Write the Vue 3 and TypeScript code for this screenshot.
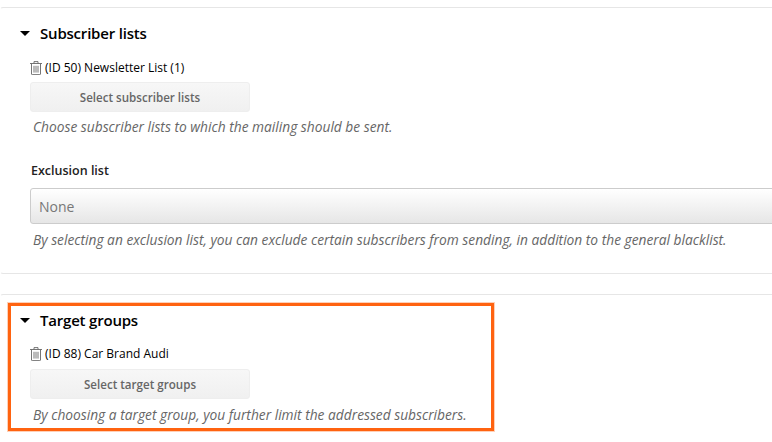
<script setup lang="ts">
</script>

<template>
  <div class="page">
    <section class="card first">
      <h3 class="title"><span class="caret"></span>Subscriber lists</h3>
      <div class="body">
        <div class="item">
          <svg class="trash" viewBox="0 0 12 14" width="12" height="14" fill="none" stroke="#666" stroke-width="0.9">
            <path d="M0 2.5H12M4 2.5V0.6H8V2.5M1.5 2.5V13Q1.5 13.6 2.2 13.6H9.8Q10.5 13.6 10.5 13V2.5M4 4.8V11.6M6 4.8V11.6M8 4.8V11.6" />
          </svg>
          <span>(ID 50) Newsletter List (1)</span>
        </div>
        <button class="btn">Select subscriber lists</button>
        <p class="help">Choose subscriber lists to which the mailing should be sent.</p>
        <label class="label">Exclusion list</label>
        <div class="select">None</div>
        <p class="help after-select">By selecting an exclusion list, you can exclude certain subscribers from sending, in addition to the general blacklist.</p>
      </div>
    </section>
    <section class="card second">
      <div class="highlight"></div>
      <h3 class="title"><span class="caret"></span>Target groups</h3>
      <div class="body">
        <div class="item">
          <svg class="trash" viewBox="0 0 12 14" width="12" height="14" fill="none" stroke="#666" stroke-width="0.9">
            <path d="M0 2.5H12M4 2.5V0.6H8V2.5M1.5 2.5V13Q1.5 13.6 2.2 13.6H9.8Q10.5 13.6 10.5 13V2.5M4 4.8V11.6M6 4.8V11.6M8 4.8V11.6" />
          </svg>
          <span>(ID 88) Car Brand Audi</span>
        </div>
        <button class="btn">Select target groups</button>
        <p class="help">By choosing a target group, you further limit the addressed subscribers.</p>
      </div>
    </section>
  </div>
</template>

<style>
html, body { margin: 0; background: #fff; overflow: hidden; }
</style>

<style scoped>
.page {
  width: 772px;
  height: 442px;
  padding-top: 7px;
  box-sizing: border-box;
  font-family: "Open Sans", sans-serif;
  color: #000;
  overflow: hidden;
}
.card {
  position: relative;
  width: 800px;
  box-sizing: border-box;
  border: 1px solid #e6e6e6;
  border-right: 0;
  border-left-color: transparent;
  border-radius: 3px;
}
.first { height: 267px; margin-bottom: 20px; }
.second { border-bottom: 0; height: 147px; }
.highlight {
  position: absolute;
  left: 7px;
  top: 8px;
  width: 486px;
  height: 128px;
  box-sizing: border-box;
  border: 3px solid #ff6310;
  box-shadow: 0 0 0 1px rgba(255, 99, 16, 0.3);
  pointer-events: none;
}
.title {
  display: flex;
  align-items: center;
  margin: 0 0 1px;
  padding: 14px 0 0 19px;
  height: 22px;
  font-size: 15px;
  letter-spacing: -0.2px;
  line-height: 22px;
  font-weight: 600;
}
.caret {
  width: 0;
  height: 0;
  margin-right: 10px;
  border-left: 5px solid transparent;
  border-right: 5px solid transparent;
  border-top: 5px solid #000;
}
.body { padding: 14px 0 0 29px; }
.second .body { padding-top: 13px; }
.item {
  display: flex;
  align-items: center;
  gap: 3px;
  height: 18px;
  font-size: 12px;
  line-height: 18px;
}
.trash { flex: none; }
.btn {
  display: block;
  width: 220px;
  height: 30px;
  margin-top: 5px;
  padding: 0;
  border: 1px solid #eee;
  border-radius: 3px;
  background: linear-gradient(#f7f7f7, #f0f0f0);
  font: 600 11.6px "Open Sans", sans-serif;
  color: #666;
}
.second .btn { margin-top: 6px; }
.help {
  margin: 6px 0 0 3px;
  font-size: 13.75px;
  line-height: 18px;
  font-style: italic;
  color: #666;
  white-space: nowrap;
}
.second .help { margin-top: 7px; }
.after-select { margin-top: 7px; }
.label {
  display: block;
  margin: 26px 0 0 1px;
  font-size: 12.5px;
  line-height: 18px;
  font-weight: 600;
  color: #222;
}
.select {
  box-sizing: border-box;
  height: 36px;
  margin-top: 8px;
  padding-left: 8px;
  border: 1px solid #ccc;
  border-radius: 3px;
  background: linear-gradient(#fff, #e6e6e6);
  font-size: 14px;
  line-height: 35px;
  color: #777;
}
</style>
